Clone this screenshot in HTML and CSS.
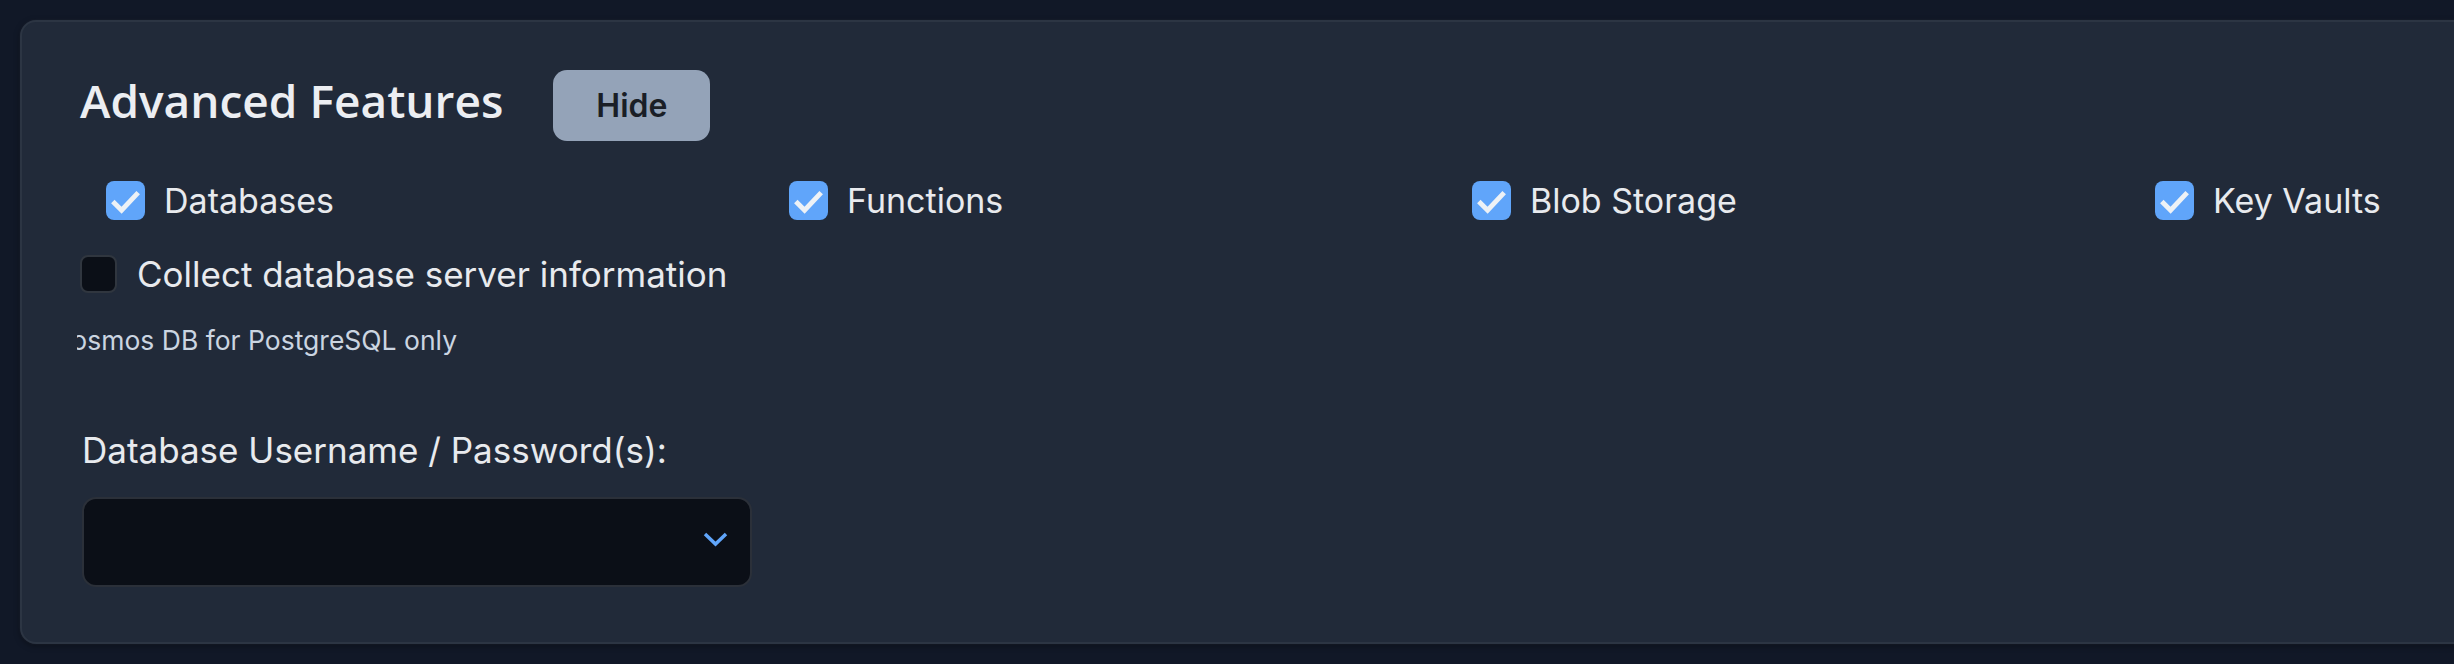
FILE: index.html
```html
<!DOCTYPE html>
<html lang="en">
<head>
<meta charset="utf-8">
<title>Advanced Features</title>
<link rel="stylesheet" href="styles.css">
</head>
<body>
<section class="panel">
  <div class="panel-head">
    <h2 class="panel-title">Advanced Features</h2>
    <button class="btn-hide" type="button">Hide</button>
  </div>

  <div class="feature-grid">
    <label class="check">
      <span class="box box-on"><svg viewBox="0 0 40 40"><polyline points="7,21 16,30 33,12"/></svg></span>
      <span class="check-text">Databases</span>
    </label>
    <label class="check">
      <span class="box box-on"><svg viewBox="0 0 40 40"><polyline points="7,21 16,30 33,12"/></svg></span>
      <span class="check-text">Functions</span>
    </label>
    <label class="check">
      <span class="box box-on"><svg viewBox="0 0 40 40"><polyline points="7,21 16,30 33,12"/></svg></span>
      <span class="check-text">Blob Storage</span>
    </label>
    <label class="check">
      <span class="box box-on"><svg viewBox="0 0 40 40"><polyline points="7,21 16,30 33,12"/></svg></span>
      <span class="check-text">Key Vaults</span>
    </label>
  </div>

  <label class="check check-collect">
    <span class="box box-off"></span>
    <span class="check-text">Collect database server information</span>
  </label>

  <div class="hint"><span class="hint-text">Cosmos DB for PostgreSQL only</span></div>

  <div class="field">
    <div class="field-label">Database Username / Password(s):</div>
    <div class="select">
      <svg class="chevron" viewBox="0 0 25 15"><polyline points="2,2 12.5,12 23,2"/></svg>
    </div>
  </div>
</section>
</body>
</html>
```

FILE: styles.css
```css
html {
  overflow: hidden;
  background: #111827;
}

body {
  margin: 0;
  background: #111827;
  font-family: Inter, "Noto Sans", sans-serif;
  color: #e5e7eb;
}

.panel {
  box-sizing: border-box;
  width: 2700px;
  height: 624px;
  margin: 20px;
  padding: 48px 58px 54px;
  background: #212a39;
  border: 2px solid #2c3543;
  border-radius: 16px;
  box-shadow: 0 0 3px rgba(255, 255, 255, 0.06), 0 2px 6px rgba(0, 0, 0, 0.35);
}

.panel-head {
  display: flex;
  align-items: flex-start;
  height: 71px;
}

.panel-title {
  margin: 0;
  font-family: "Open Sans", "Noto Sans", sans-serif;
  font-weight: 600;
  font-size: 46px;
  line-height: 60px;
  color: #eceef2;
}

.btn-hide {
  margin-left: 50px;
  width: 157px;
  height: 71px;
  border: 0;
  border-radius: 14px;
  background: #94a3b8;
  color: #1a1e26;
  font-family: Inter, sans-serif;
  font-weight: 600;
  font-size: 32px;
  padding: 0;
}

.feature-grid {
  display: grid;
  grid-template-columns: repeat(4, 683px);
  margin-top: 40px;
  padding-left: 26px;
}

.check {
  display: flex;
  align-items: center;
  gap: 19px;
  height: 39px;
}

.check-text {
  font-size: 34px;
  line-height: 39px;
  color: #e8eaee;
  white-space: nowrap;
}

.box {
  box-sizing: border-box;
  flex: none;
  width: 39px;
  height: 39px;
  border-radius: 8px;
  display: flex;
}

.box-on {
  background: #60a5fa;
}

.box-on svg {
  width: 100%;
  height: 100%;
}

.box-on polyline {
  fill: none;
  stroke: #eef2f6;
  stroke-width: 5;
}

.box-off {
  width: 37px;
  height: 38px;
  background: #0b0f17;
  border: 2px solid #30363f;
}

.check-collect {
  margin-top: 35px;
  height: 38px;
  gap: 20px;
}

.check-collect .check-text {
  font-size: 35px;
}

.hint {
  margin-top: 31px;
  margin-left: -3px;
  width: 440px;
  overflow: hidden;
  height: 32px;
}

.hint-text {
  display: block;
  margin-left: -25px;
  font-size: 26.5px;
  line-height: 32px;
  color: #cbd5e1;
  white-space: nowrap;
}

.field {
  margin-top: 73px;
  margin-left: 2px;
}

.field-label {
  font-size: 35px;
  line-height: 42px;
  color: #e8eaee;
}

.select {
  box-sizing: border-box;
  margin-top: 26px;
  width: 670px;
  height: 90px;
  background: #0b0f17;
  border: 2px solid #2b3039;
  border-radius: 14px;
  display: flex;
  align-items: center;
  justify-content: flex-end;
  padding-right: 22px;
}

.chevron {
  width: 25px;
  height: 15px;
  margin-top: -6px;
}

.chevron polyline {
  fill: none;
  stroke: #60a5fa;
  stroke-width: 3.5;
}
```
